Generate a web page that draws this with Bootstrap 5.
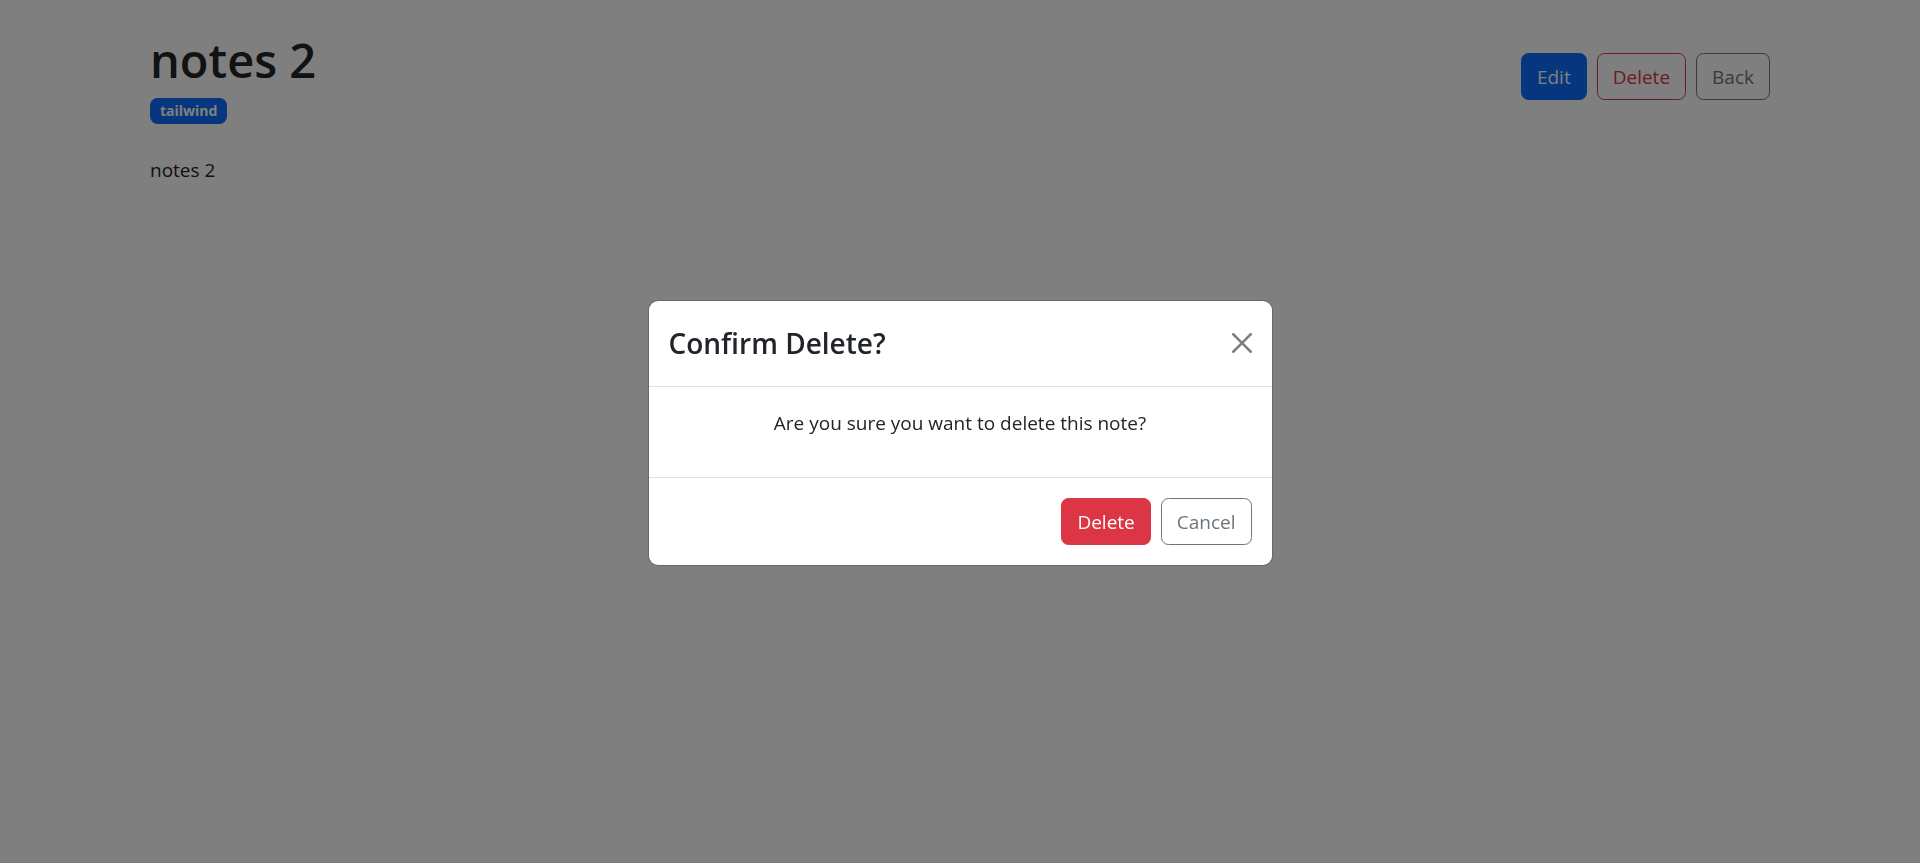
<!DOCTYPE html>
<html lang="en">
<head>
<meta charset="utf-8">
<meta name="viewport" content="width=device-width, initial-scale=1">
<title>notes 2</title>
<link href="https://cdn.jsdelivr.net/npm/bootstrap@5.3.0/dist/css/bootstrap.min.css" rel="stylesheet">
<style>
  html { font-size: 20px; }
  body {
    font-family: "Open Sans", "Noto Sans", sans-serif;
    font-size: 19px;
    line-height: 32px;
  }
  .container { --bs-gutter-x: 30px; }
  .note-page { padding-top: 28px; }
  .note-title { font-size: 47px; font-weight: 600; line-height: 64px; margin-bottom: 6px; }
  .tag-badge { font-size: 14px; line-height: 16px; padding: 5px 10px; }
  .btn { --bs-btn-font-size: 19px; --bs-btn-line-height: 30px; padding: 8px 15px 7px; }
  .modal { padding-top: 2px; }
  .modal-title { font-size: 28px; font-weight: 600; line-height: 45px; }
  .modal-body p { margin-bottom: 18px; }
  .btn-close { font-size: 20px; }
  .modal-footer .btn { margin: 5px; }
  @media (min-width: 1400px) {
    .container { max-width: 1650px; }
    .confirm-dialog { max-width: 625px; }
  }
</style>
</head>
<body class="modal-open overflow-hidden">
<main class="container note-page">
  <div class="d-flex justify-content-between align-items-center mb-4">
    <div>
      <h1 class="note-title">notes 2</h1>
      <div class="d-flex gap-2"><span class="badge bg-primary tag-badge">tailwind</span></div>
    </div>
    <div class="d-flex gap-2">
      <button type="button" class="btn btn-primary">Edit</button>
      <button type="button" class="btn btn-outline-danger">Delete</button>
      <button type="button" class="btn btn-outline-secondary">Back</button>
    </div>
  </div>
  <p>notes 2</p>
</main>

<div class="modal-backdrop show"></div>
<div class="modal show d-block" role="dialog" aria-modal="true" aria-labelledby="confirmTitle" tabindex="-1">
  <div class="modal-dialog modal-dialog-centered confirm-dialog">
    <div class="modal-content">
      <div class="modal-header">
        <h4 class="modal-title" id="confirmTitle">Confirm Delete?</h4>
        <button type="button" class="btn-close" aria-label="Close"></button>
      </div>
      <div class="modal-body text-center">
        <p>Are you sure you want to delete this note?</p>
      </div>
      <div class="modal-footer">
        <button type="button" class="btn btn-danger">Delete</button>
        <button type="button" class="btn btn-outline-secondary">Cancel</button>
      </div>
    </div>
  </div>
</div>
<script src="https://cdn.jsdelivr.net/npm/bootstrap@5.3.0/dist/js/bootstrap.bundle.min.js"></script>
</body>
</html>
